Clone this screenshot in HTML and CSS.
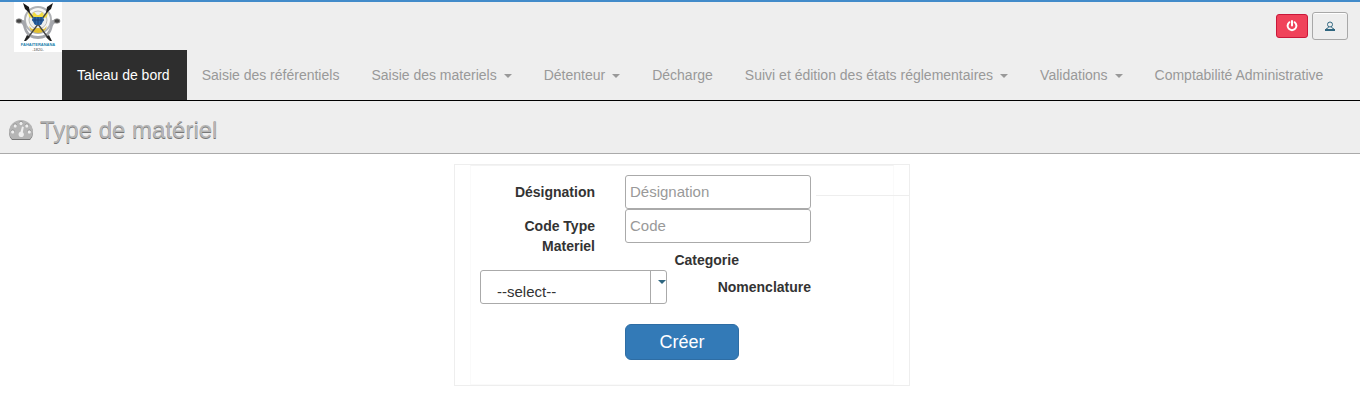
FILE: index.html
```html
<!DOCTYPE html>
<html lang="fr">
<head>
<meta charset="utf-8">
<title>Type de matériel</title>
<link rel="stylesheet" href="styles.css">
</head>
<body>
<header class="topbar">
  <a class="brand" href="#" aria-label="Accueil">
    <svg class="logo" viewBox="0 0 48 50" aria-hidden="true">
      <rect width="48" height="50" fill="#fff"/>
      <circle cx="24" cy="18" r="13" fill="#f6f6f4" stroke="#b0b2b5" stroke-width="2"/>
      <circle cx="24" cy="18" r="9" fill="#eceeed" stroke="#bcbcb8" stroke-width="1"/>
      <path d="M5 17.500C11 17 12 20 12 24C13 31 18 34 24 34C30 34 35 31 36 24C36 20 37 17 43 17.500V21C39 21 39 24 38 27C36 34 30 37 24 37C18 37 12 34 10 27C9 24 9 21 5 21Z" fill="#a4a6ab"/>
      <path d="M15 15L14 10L18 13L20 10L23 13H25L28 10L30 13L34 10L33 15L28 17H20Z" fill="#f0dc45"/>
      <path d="M15 24Q17 31 24 31Q31 31 33 24L30 27L24 26L18 27Z" fill="#e3c02f"/>
      <path d="M12 6L35 37M36 6L13 37" stroke="#444" stroke-width="1.300"/>
      <path d="M9 1L15 5L16 11L11 7ZM39 1L33 5L32 11L37 7Z" fill="#181818"/>
      <path d="M13 33L16 35L12 39L10 39ZM35 33L32 35L36 39L38 39Z" fill="#222"/>
      <path d="M19 15H29L30 18L27 23H21L18 18Z" fill="#2b65a6"/>
      <path d="M18 18H30M21 15V22M24 15V23M27 15V22" stroke="#173d70" stroke-width=".8"/>
      <ellipse cx="5" cy="19" rx="3" ry="2.200" fill="#444" stroke="#999" stroke-width=".8"/>
      <ellipse cx="43" cy="19" rx="3" ry="2.200" fill="#444" stroke="#999" stroke-width=".8"/>
      <text class="logo-name" x="24" y="44" text-anchor="middle">FAHAITERANANA</text>
      <text class="logo-year" x="24" y="49" text-anchor="middle">-1820-</text>
    </svg>
  </a>
  <div class="actions">
    <button class="btn-power" type="button" aria-label="Déconnexion">
      <svg width="12" height="12" viewBox="0 0 12 12" aria-hidden="true"><path d="M3.400 2.200A4.400 4.400 0 1 0 8.600 2.200M6 1V5.400" fill="none" stroke="#fff" stroke-width="2" stroke-linecap="round"/></svg>
    </button>
    <button class="btn-user" type="button" aria-label="Utilisateur">
      <svg width="10" height="10" viewBox="0 0 10 10" aria-hidden="true"><circle cx="5" cy="3.500" r="2.500" fill="none" stroke="#2f6680" stroke-width="1"/><path d="M3.500 6Q3 7.500 1 8M6.500 6Q7 7.500 9 8" fill="none" stroke="#2f6680"/><path d="M0 8H10V10H0Z" fill="#2f6680"/></svg>
    </button>
  </div>
  <nav class="nav">
    <a class="active" href="#">Taleau de bord</a>
    <a href="#">Saisie des référentiels</a>
    <a href="#">Saisie des materiels<span class="caret"></span></a>
    <a href="#">Détenteur<span class="caret"></span></a>
    <a href="#">Décharge</a>
    <a href="#">Suivi et édition des états réglementaires<span class="caret"></span></a>
    <a href="#">Validations<span class="caret"></span></a>
    <a href="#">Comptabilité Administrative</a>
  </nav>
</header>
<div class="page-title">
  <svg width="24" height="20" viewBox="0 0 24 20" aria-hidden="true">
    <path d="M3 20Q0 17 0 13A12 12 0 0 1 24 13Q24 17 21 20Z" fill="#777"/>
    <path d="M3 19Q0 16 0 12A12 12 0 0 1 24 12Q24 16 21 19Z" fill="#b5b5b5"/>
    <g fill="#888"><circle cx="3.700" cy="11.500" r="1.900"/><circle cx="6.200" cy="5.500" r="1.900"/><circle cx="12" cy="3" r="1.900"/><circle cx="17.800" cy="5.500" r="1.900"/><circle cx="20.300" cy="11.500" r="1.900"/></g>
    <g fill="#eee"><circle cx="3.700" cy="12" r="1.700"/><circle cx="6.200" cy="6" r="1.700"/><circle cx="12" cy="3.500" r="1.700"/><circle cx="17.800" cy="6" r="1.700"/><circle cx="20.300" cy="12" r="1.700"/><path d="M13 6.500L14.800 6.900L13.800 12.200A2.700 2.700 0 1 1 11.500 11.800Z"/></g>
  </svg>
  <h1>Type de matériel</h1>
</div>
<main class="content">
  <form class="panel">
    <div class="fields">
      <div class="row">
        <label for="designation">Désignation</label>
        <input id="designation" type="text" placeholder="Désignation">
        <hr class="rule">
      </div>
      <div class="row">
        <label for="code">Code Type Materiel</label>
        <input id="code" type="text" placeholder="Code">
      </div>
      <label class="category" for="category">Categorie</label>
      <div class="choices">
        <div class="select-box">
          <select id="category"><option>--select--</option></select>
          <span class="select-arrow"><svg width="8" height="4" viewBox="0 0 8 4" aria-hidden="true"><path d="M0 0H8L4 4Z" fill="#2f6680"/></svg></span>
        </div>
        <span class="nomenclature">Nomenclature</span>
      </div>
      <button class="btn-create" type="submit">Créer</button>
    </div>
  </form>
</main>
</body>
</html>
```
FILE: styles.css
```css
* { box-sizing: border-box; }
body {
  margin: 0;
  background: #fff;
  color: #333;
  font: 14px/20px "Liberation Sans", Arial, sans-serif;
}
svg { display: block; }
.topbar {
  display: grid;
  grid-template-columns: 48px 1fr;
  grid-template-rows: 48px auto;
  padding-left: 14px;
  background: #eee;
  border-top: 2px solid #428bca;
  border-bottom: 1px solid #000;
}
.brand { height: 50px; }
.logo { width: 48px; height: 50px; }
.logo-name { font-size: 4px; font-weight: bold; fill: #1e83ad; }
.logo-year { font-size: 4px; fill: #444; }
.actions {
  display: flex;
  justify-content: flex-end;
  align-items: center;
  gap: 4px;
  padding-right: 12px;
}
.btn-power, .btn-user {
  display: flex;
  align-items: center;
  justify-content: center;
  padding: 0;
  border-radius: 3px;
}
.btn-power { width: 32px; height: 24px; background: #f0425a; border: 1px solid #c9183a; }
.btn-user { width: 36px; height: 28px; background: #eee; border: 1px solid #a8a8a8; box-shadow: inset 0 1px 0 #fff; }
.nav { grid-column: 2; display: flex; white-space: nowrap; }
.nav a { padding: 15px 17px 15px 15px; color: #999; text-decoration: none; }
.nav .active { background: #2e2e2e; color: #fff; }
.caret {
  display: inline-block;
  margin-left: 7px;
  vertical-align: middle;
  border: 4px solid transparent;
  border-top-color: #999;
  border-bottom: 0;
}
.page-title {
  display: flex;
  align-items: center;
  gap: 7px;
  padding: 14px 9px 8px;
  background: #eee;
  border-bottom: 1px solid #aaa;
}
.page-title h1 {
  margin: 0;
  color: #b5b5b5;
  font-size: 24px;
  line-height: 30px;
  font-weight: normal;
  text-shadow: 0 1px 0 #777;
}
.content { display: flex; justify-content: center; padding: 10px 0 10px 4px; }
.panel { width: 456px; padding: 0 15px; border: 1px solid #eee; }
.fields {
  padding: 9px 9px 24px;
  border: 1px solid #fafafa;
  border-top-color: #f3f3f3;
}
.row { display: grid; grid-template-columns: 115px 186px 1fr; align-items: start; column-gap: 30px; }
.row label { padding-top: 7px; text-align: right; }
label, .nomenclature { font-weight: bold; }
input {
  width: 100%;
  height: 34px;
  padding: 0 4px 2px;
  border: 1px solid #aaa;
  border-radius: 3px;
  background: #fff;
  color: #333;
  font: 15px/20px "Liberation Sans", Arial, sans-serif;
}
input::placeholder { color: #999; }
.rule {
  align-self: start;
  margin: 20px -25px 0 -25px;
  border: 0;
  border-top: 1px solid #eee;
}
.category { display: block; width: 259px; margin-top: -6px; text-align: right; }
.choices { display: flex; width: 331px; justify-content: space-between; align-items: center; }
.select-box {
  display: grid;
  grid-template-columns: 1fr 16px;
  width: 187px;
  height: 34px;
  border: 1px solid #aaa;
  border-radius: 3px;
}
select {
  grid-area: 1 / 1 / 2 / 3;
  appearance: none;
  padding: 10px 16px 0;
  border: 0;
  background: transparent;
  color: #333;
  font: 15px/20px "Liberation Sans", Arial, sans-serif;
}
.select-arrow {
  grid-area: 1 / 2;
  display: flex;
  justify-content: flex-end;
  padding-top: 9px;
  border-left: 1px solid #aaa;
  pointer-events: none;
}
.btn-create {
  display: block;
  width: 114px;
  height: 36px;
  margin: 20px 0 0 145px;
  padding: 0;
  background: #337ab7;
  border: 1px solid #2e6da4;
  border-radius: 6px;
  color: #fff;
  font: 18px/24px "Liberation Sans", Arial, sans-serif;
}
```
